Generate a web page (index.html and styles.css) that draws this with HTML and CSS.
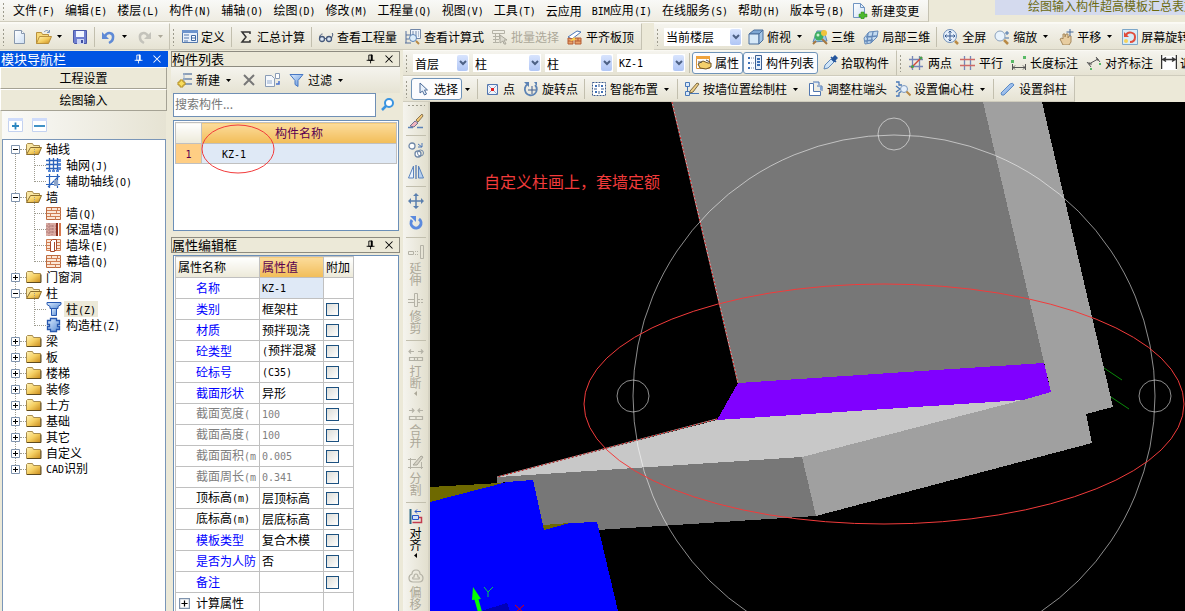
FILE: index.html
```html
<!DOCTYPE html>
<html lang="zh-CN">
<head>
    <meta charset="UTF-8">
    <meta name="viewport" content="width=device-width, initial-scale=1.0">
    <title>绘图输入</title>
    <link rel="stylesheet" href="styles.css">
</head>
<body>
    <!-- icon sprite -->
    <svg class="sprite" aria-hidden="true">
        <defs>
            <linearGradient id="gFolder" x1="0" y1="0" x2="1" y2="1"><stop offset="0" stop-color="#fff3b8"/><stop offset=".5" stop-color="#f5cf62"/><stop offset="1" stop-color="#c88a1c"/></linearGradient>
            <linearGradient id="gBlue" x1="0" y1="0" x2="1" y2="1"><stop offset="0" stop-color="#dcecff"/><stop offset="1" stop-color="#5c8fd6"/></linearGradient>
            <linearGradient id="gPaper" x1="0" y1="0" x2="1" y2="1"><stop offset="0" stop-color="#fff"/><stop offset="1" stop-color="#cfe0f4"/></linearGradient>
        </defs>
        <symbol id="i-new" viewBox="0 0 16 16"><path d="M2.500 1.500h7l3 3v10h-10z" fill="url(#gPaper)" stroke="#8797ad"/><path d="M9.500 1.500v3h3" fill="#fff" stroke="#8797ad"/></symbol>
        <symbol id="i-open" viewBox="0 0 16 16"><path d="M0.500 14.500v-11h5l1 2h6v3" fill="#f7d978" stroke="#b9903c"/><path d="M0.500 14.500l3-7h12l-3 7z" fill="url(#gFolder)" stroke="#b9903c"/><path d="M8 3c2-2 4-2 5 0M13.500 1v2.500h-2.500" fill="none" stroke="#7a94b8"/></symbol>
        <symbol id="i-save" viewBox="0 0 16 16"><path d="M1.500 1.500h13v13h-12l-1-1z" fill="#6f7fd0" stroke="#4a58a8"/><path d="M4 2h8v6h-8z" fill="#f1f5ff"/><path d="M5 10h7v5h-7z" fill="#cdd6f3"/><path d="M9 11h2v3h-2z" fill="#3f4da0"/></symbol>
        <symbol id="i-undo" viewBox="0 0 16 16"><path d="M4 7c3-5 9-3 8 2c0 2-2 4-4 5" fill="none" stroke="#5f8ad6" stroke-width="2.500"/><path d="M1 3l0 7h7z" fill="#5f8ad6"/></symbol>
        <symbol id="i-redo" viewBox="0 0 16 16"><path d="M11 7c-3-5-9-3-8 2c0 2 2 4 4 5" fill="none" stroke="#c4c3bb" stroke-width="2.500"/><path d="M14 3v7h-7z" fill="#c4c3bb"/></symbol>
        <symbol id="i-define" viewBox="0 0 16 16"><path d="M.5 1.500h15v12h-15z" fill="#e8f0fb" stroke="#5579ad"/><path d="M0 1h16v3h-16z" fill="#6c93cc"/><path d="M2 6h5M2 9h5M2 12h4" stroke="#5579ad"/><path d="M9.500 6.500h4v5h-4zM9.500 9h4" fill="#fff" stroke="#3f67a0"/></symbol>
        <symbol id="i-sum" viewBox="0 0 16 16"><path d="M12 5v-2h-8l4 5l-4 5h8v-2" fill="none" stroke="#333" stroke-width="1.500"/></symbol>
        <symbol id="i-glasses" viewBox="0 0 16 16"><circle cx="4" cy="10" r="2.500" fill="#dde8f5" stroke="#46597a" stroke-width="1.300"/><circle cx="11" cy="10" r="2.500" fill="#dde8f5" stroke="#46597a" stroke-width="1.300"/><path d="M6.500 9.500h2M1.500 9c0-3 2-4 3-4M13.500 9c1-2 2-4 .5-5" fill="none" stroke="#46597a"/></symbol>
        <symbol id="i-formula" viewBox="0 0 16 16"><path d="M5.500 .5h10v9h-10z" fill="#eef3fa" stroke="#7187a8"/><path d="M7 3h7M7 5h7M7 7h7" stroke="#7187a8" stroke-dasharray="2 1"/><path d="M1 2v12M0 14h6M1 6h4M1 10h3" stroke="#56719d"/><circle cx="8" cy="9" r="3.500" fill="#dcedfb" stroke="#5c83b4"/><path d="M11 12l3 3" stroke="#b98a45" stroke-width="2"/></symbol>
        <symbol id="i-batch" viewBox="0 0 16 16"><path d="M.5 1.500h12v3h-12zM3.500 4v10M7.500 4v6M1 7.500h8M1 10.500h6M1 13.500h6" fill="none" stroke="#b4b2a6"/><path d="M8 6l7 5h-3l2 4l-2 0l-1-3l-3 2z" fill="#dddbd0" stroke="#aaa89c"/></symbol>
        <symbol id="i-slab" viewBox="0 0 16 16"><path d="M1 8l9-6l4 1l-9 7z" fill="#fff" stroke="#4d79b8"/><path d="M1 9v6h5v-5zM8 9h6v6h-6z" fill="#e9a06a" stroke="#b45c32"/><path d="M8 12h6M11 9v3M1 12h5" stroke="#b45c32"/><path d="M3 12l4-4l2 3z" fill="#ffd24a"/></symbol>
        <symbol id="i-cube" viewBox="0 0 16 16"><path d="M1 5l5-4h9l-4 4z" fill="#7fa8d4" stroke="#4b6f9c"/><path d="M1 5h10v10h-10z" fill="#d7e9f8" stroke="#4b6f9c"/><path d="M11 5l4-4v10l-4 4z" fill="#a6c6e6" stroke="#4b6f9c"/></symbol>
        <symbol id="i-3d" viewBox="0 0 16 16"><path d="M1 13l4-11h7l3 10z" fill="#9fc7e8" stroke="#5c88b6"/><circle cx="7" cy="7" r="4.500" fill="#3faf62"/><circle cx="12" cy="4" r="3" fill="#f0c33a"/><circle cx="6" cy="6" r="1.500" fill="#c9f1d2"/><path d="M10 10l5 5M1 15l3-3" stroke="#a77840" stroke-width="2"/></symbol>
        <symbol id="i-part3d" viewBox="0 0 16 16"><path d="M1 9l5-6l9-1l-1 6l-6 6l-6 1z" fill="#c2daf0" stroke="#6489b8"/><path d="M5 4l-1 10M10 3l-2 11M3 8l11-1M2 12l8-1" fill="none" stroke="#6489b8" stroke-width="1.300"/></symbol>
        <symbol id="i-full" viewBox="0 0 16 16"><circle cx="7" cy="7" r="6.500" fill="#e6f0fb" stroke="#6f8fb8"/><path d="M7 2v10M2 7h10M5.500 3.500l1.500-1.500l1.500 1.500M5.500 10.500l1.500 1.500l1.500-1.500M3.500 5.500l-1.500 1.500l1.500 1.500M10.500 5.500l1.500 1.500l-1.500 1.500" fill="none" stroke="#34588f"/><path d="M12 12l3 3" stroke="#b98a45" stroke-width="2.500"/></symbol>
        <symbol id="i-zoom" viewBox="0 0 16 16"><circle cx="6" cy="7" r="5" fill="#e9f3fc" stroke="#8ba2be"/><path d="M10 11l4 4" stroke="#b98a45" stroke-width="2.500"/><path d="M11 4h4M13 2v4M11 9h4" stroke="#4772ac"/></symbol>
        <symbol id="i-pan" viewBox="0 0 16 16"><path d="M2 10l2-1l1 1v-5h2v3l1-3h2v4l1-2h2v6l-2 3h-6z" fill="#e8cda0" stroke="#a5885c"/><path d="M12 0v7M8.500 3h7" stroke="#47699a"/></symbol>
        <symbol id="i-rotscr" viewBox="0 0 16 16"><path d="M.5 .5h15v15h-15z" fill="#d7ecf8" stroke="#7da7c9"/><path d="M4 6c2-4 9-3 9 2c0 3-2 5-5 5" fill="none" stroke="#e04d3c" stroke-width="2"/><path d="M2 3v5h5z" fill="#e04d3c"/><circle cx="4" cy="12" r="2" fill="#f6d35b"/></symbol>
        <symbol id="i-doc" viewBox="0 0 16 16"><path d="M1.500 .5h7l4 4v10h-11z" fill="url(#gPaper)" stroke="#6f94c2"/><path d="M8.500 .5v4h4" fill="none" stroke="#6f94c2"/><path d="M9 9h3v2h3v3h-3v2h-3v-2h-2v-3h2z" fill="#4db82e" stroke="#2c8a16" stroke-width=".5"/></symbol>
        <symbol id="i-prop" viewBox="0 0 16 16"><path d="M.5 1.500h13v12h-13z" fill="#fff" stroke="#d79440"/><path d="M0 1h14v3h-14z" fill="#f0a33c"/><path d="M2 9l5-3l5 2l3 0v4l-5 2l-6-1z" fill="#f3cf6c" stroke="#6c5328"/><path d="M2 7h4M10 5l4 2" stroke="#4a4a4a"/></symbol>
        <symbol id="i-list" viewBox="0 0 16 16"><path d="M1 2h2v2h-2zM1 7h2v2h-2zM1 12h2v2h-2z" fill="#3d6fb5"/><path d="M4 3h3M4 8h3M4 13h3" stroke="#6f86a8" stroke-dasharray="1 1"/><path d="M8.500 .5h6v14h-6z" fill="#e5effb" stroke="#3d5f92"/><path d="M10 4h3M10 7h3M10 10h3" stroke="#3d6fb5" stroke-width="2"/></symbol>
        <symbol id="i-pick" viewBox="0 0 16 16"><path d="M2 14l1-4l6-6l3 3l-6 6z" fill="#cfe4f7" stroke="#5f88ba"/><path d="M9 2l5 5M10 4l3-3l2 2l-3 3z" fill="#24559c" stroke="#24559c" stroke-width="1.500"/></symbol>
        <symbol id="i-twopt" viewBox="0 0 16 16"><path d="M3.500 1v14M10.500 1v14M0 4.500h14M0 11.500h14" stroke="#7586b8" stroke-width="1.300"/><path d="M2 13l11-11" stroke="#d0493b" stroke-width="1.500"/><circle cx="3.500" cy="11.500" r="1.500" fill="#45a050"/><circle cx="12" cy="3" r="1.500" fill="#45a050"/></symbol>
        <symbol id="i-parallel" viewBox="0 0 16 16"><path d="M4.500 1v14M10.500 1v14" stroke="#7586b8" stroke-width="1.300"/><path d="M0 4.500h15M0 10.500h15" stroke="#cf6a66" stroke-width="1.300"/></symbol>
        <symbol id="i-length" viewBox="0 0 16 16"><path d="M1.500 9v6M14.500 9v6M2 12.500h12M4 10.500l-2 2l2 2M12 10.500l2 2l-2 2" fill="none" stroke="#555"/><path d="M0 5h3v3h-3zM12 1h3v3h-3z" fill="#58b966"/></symbol>
        <symbol id="i-aligned" viewBox="0 0 16 16"><path d="M1 7l4 5M10 2l4 5M3 9l9-5M3 7v2h3M10 4h2v2" fill="none" stroke="#555"/><path d="M4 13h2v2h-2zM13 8h2v2h-2z" fill="#58b966"/></symbol>
        <symbol id="i-adjust" viewBox="0 0 16 16"><path d="M0 1h16v14h-16z" fill="#fff"/><path d="M.5 0v14M15.500 0v14M1 4.500h14M5 2.500l-3 2l3 2M11 2.500l3 2l-3 2" fill="none" stroke="#333" stroke-width="1.500"/></symbol>
        <symbol id="i-cursor" viewBox="0 0 16 16"><path d="M5 2v10l2.500-2l2 4l2-1l-2-4h3z" fill="#e8f0fb" stroke="#4a6a98"/></symbol>
        <symbol id="i-point" viewBox="0 0 16 16"><path d="M3.500 3.500h10v10h-10z" fill="#eef3fb" stroke="#5277b0"/><path d="M4 4l9 9M13 4l-9 9" stroke="#9aa9c6"/><path d="M7 7h3v3h-3z" fill="#e02020"/></symbol>
        <symbol id="i-rotpt" viewBox="0 0 16 16"><path d="M5 3a6 6 0 1 0 7 1" fill="none" stroke="#5c83b4" stroke-width="1.800"/><path d="M1 1h5v5zM11 1h3v4z" fill="#5c83b4"/><path d="M9 5v8M5 9h8" stroke="#405f90"/></symbol>
        <symbol id="i-smart" viewBox="0 0 16 16"><path d="M1.500 1.500h13v13h-13z" fill="#fff" stroke="#3e5c8c" stroke-dasharray="2 1"/><path d="M8 3v10M3 8h10" stroke="#3e5c8c" stroke-dasharray="3 4"/><path d="M4 4h2v2h-2zM10 4h2v2h-2zM4 10h2v2h-2zM10 10h2v2h-2z" fill="#3e6fb5"/></symbol>
        <symbol id="i-bywall" viewBox="0 0 16 16"><path d="M1.500 1.500h4v4h-4zM1.500 10.500h4v4h-4zM3.500 5v6M5 12.500h10" fill="#d9e8f8" stroke="#4878b8"/><path d="M6 10l7-8l2 1l-6 8l-3 1z" fill="#efcf86" stroke="#7c6a42"/></symbol>
        <symbol id="i-end" viewBox="0 0 16 16"><path d="M1.500 2.500h4v8h7v4h-11z" fill="#fff" stroke="#5277b0"/><path d="M5 1h6v3M9 5h5v5" fill="#d9e8f8" stroke="#5277b0"/><path d="M12 5l3 2l-3 3z" fill="#7fa3d4"/></symbol>
        <symbol id="i-ecc" viewBox="0 0 16 16"><path d="M1 1h3v3h3M1 15h3v-3l3-2M1 5l4 3l-4 3" fill="none" stroke="#4878b8" stroke-width="1.300"/><circle cx="9" cy="8" r="3.500" fill="#e6f0fb" stroke="#7d99bf"/><path d="M11.500 10.500l4 4" stroke="#b98a45" stroke-width="2"/></symbol>
        <symbol id="i-slant" viewBox="0 0 16 16"><path d="M1 12l9-9q3-2 4 1l-10 10q-3 1-3-2z" fill="url(#gBlue)" stroke="#5a8ac6"/></symbol>

        <symbol id="i-pin" viewBox="0 0 16 16"><path d="M5.500 3.500h4v6h-4zM3 9.500h9M7.500 10v3" fill="none" stroke="currentColor" stroke-width="1"/><path d="M8.500 3v7" stroke="currentColor" stroke-width="1.500"/></symbol>
        <symbol id="i-close" viewBox="0 0 16 16"><path d="M4 4l8 8M12 4l-8 8" stroke="currentColor" stroke-width="1.200"/></symbol>
        <symbol id="i-down" viewBox="0 0 5 3"><path d="M0 0h5l-2.500 3z" fill="currentColor"/></symbol>
        <symbol id="i-left" viewBox="0 0 3 5"><path d="M3 0v5l-3-2.500z" fill="currentColor"/></symbol>
        <symbol id="i-chev" viewBox="0 0 8 6"><path d="M1 1l3 3l3-3" fill="none" stroke="#4d6185" stroke-width="2"/></symbol>
        <symbol id="i-plusbox" viewBox="0 0 16 16"><path d="M.5 1.500h14v13h-14z" fill="#fff" stroke="#c4d2f0"/><path d="M0 1h15v3h-15z" fill="#cfdcfb"/><path d="M7.500 5.500v7M4 9h7" stroke="#2c86c0" stroke-width="1.800"/></symbol>
        <symbol id="i-minusbox" viewBox="0 0 16 16"><path d="M.5 1.500h14v13h-14z" fill="#fff" stroke="#c4d2f0"/><path d="M0 1h15v3h-15z" fill="#cfdcfb"/><path d="M2 9h11" stroke="#2c86c0" stroke-width="1.800"/></symbol>
        <symbol id="i-plus" viewBox="0 0 9 9"><path d="M.5 .5h8v8h-8z" fill="#fff" stroke="#7f93ad"/><path d="M2 4.500h5M4.500 2v5" stroke="#000"/></symbol>
        <symbol id="i-minus" viewBox="0 0 9 9"><path d="M.5 .5h8v8h-8z" fill="#fff" stroke="#7f93ad"/><path d="M2 4.500h5" stroke="#000"/></symbol>
        <symbol id="i-folder" viewBox="0 0 16 16"><path d="M.5 13.500v-10l1-1h5l1 2h7v9z" fill="url(#gFolder)" stroke="#a88c4e"/><path d="M1 13.500h14v-8" fill="none" stroke="#5f4a1e"/></symbol>
        <symbol id="i-folderopen" viewBox="0 0 16 16"><path d="M.5 12.500v-9l1-1h5l1 2h6v3" fill="#f9e6a2" stroke="#a88c4e"/><path d="M.5 13.500l4-7h11l-3 7z" fill="url(#gFolder)" stroke="#8a6c2c"/></symbol>
        <symbol id="i-grid" viewBox="0 0 16 16"><path d="M3.500 1v13M7.500 1v13M11.500 1v13M0 3.500h14M0 7.500h14M0 11.500h14" stroke="#2b62bb" stroke-width="1.300"/><path d="M12 2h3v3h-3zM12 6h3v3h-3zM12 10h3v3h-3zM2 13h3v2h-3zM6 13h3v2h-3zM10 13h3v2h-3z" fill="#5b8ad6"/></symbol>
        <symbol id="i-auxgrid" viewBox="0 0 16 16"><path d="M3.500 1v14M11.500 1v14M0 3.500h14M0 11.500h14M2 14l11-11" stroke="#2b62bb" stroke-width="1.200"/><path d="M8 7h4v6h-4z" fill="#8da4c9"/></symbol>
        <symbol id="i-brick" viewBox="0 0 16 16"><path d="M.5 2.500h14v12h-14z" fill="#fbe7d6" stroke="#bd6a3f"/><path d="M1 5.500h14M1 8.500h14M1 11.500h14M5.500 3v3M10.500 6v3M4.500 9v3M9.500 12v3M11.500 3v3" stroke="#cf7d52"/></symbol>
        <symbol id="i-insul" viewBox="0 0 16 16"><path d="M0 2h10v13h-10z" fill="#d9aaa2"/><path d="M0 5h10M0 8h10M0 11h10M3 2v13M6 4v10" stroke="#b07b78" stroke-dasharray="2 1"/><path d="M10 2h2v13h-2z" fill="#8a3020"/><path d="M13 2h2v13h-2z" fill="#d97a4e"/></symbol>
        <symbol id="i-pier" viewBox="0 0 16 16"><path d="M.5 2.500h14v11h-14zM1 5.500h14M1 8.500h14M1 11.500h14" fill="#fbe7d6" stroke="#cf7d52"/><path d="M4.500 4.500l2-2h4v10l-2 2h-4zM8.500 5v9" fill="#fff" stroke="#a8492a"/></symbol>
        <symbol id="i-column" viewBox="0 0 16 16"><path d="M1 1.500h14v2l-3 2v2h-8v-2l-3-2z" fill="url(#gBlue)" stroke="#2758b0"/><path d="M5.500 7.500h5v7h-5z" fill="url(#gBlue)" stroke="#2758b0"/></symbol>
        <symbol id="i-tiecol" viewBox="0 0 16 16"><path d="M4.500 1.500h6v2h3v4h-2v2h2v3h-3v2h-6v-2h-3v-3h2v-2h-2v-4h3z" fill="url(#gBlue)" stroke="#2758b0" stroke-width="1.300"/></symbol>

        <symbol id="i-add" viewBox="0 0 16 16"><path d="M6 2h9M6 7h9M8 12h7" stroke="#6d87ab" stroke-width="1.500"/><path d="M7 1v11" stroke="#9eb1cc"/><path d="M3 8h3v2h2v3h-2v2h-3v-2h-2v-3h2z" fill="#f8dc5c" stroke="#b08b20"/></symbol>
        <symbol id="i-del" viewBox="0 0 16 16"><path d="M3 3l10 10M13 3l-10 10" stroke="#777" stroke-width="2"/></symbol>
        <symbol id="i-copy" viewBox="0 0 16 16"><path d="M.5 3.500h6l3 3v8h-9z" fill="#f5f8fc" stroke="#8a9cb6"/><path d="M2 8h5v4h-5z" fill="#c5d2e5"/><path d="M10.500 1.500h4v5h-4z" fill="#fff" stroke="#8a9cb6"/><path d="M14 9v3h-3" fill="none" stroke="#4a72d0" stroke-width="1.500"/></symbol>
        <symbol id="i-filter" viewBox="0 0 16 16"><path d="M1 2.500h13l-5 6v6l-3-2v-4z" fill="url(#gBlue)" stroke="#4878c4"/></symbol>
        <symbol id="i-search" viewBox="0 0 16 16"><circle cx="9" cy="7" r="4" fill="#fff" stroke="#3a94e0" stroke-width="2"/><path d="M6 10l-4 4" stroke="#3a94e0" stroke-width="2.500"/></symbol>

        <symbol id="i-erase" viewBox="0 0 16 16"><path d="M0 14.500h5M9 14.500h6" stroke="#5b83b8" stroke-width="1.500"/><path d="M8 7l6-6l1 2l-5 6z" fill="#f1c878" stroke="#8c7550"/><path d="M7 8l3 2l-4 4l-4-1z" fill="#f0b4bd" stroke="#6f6f92"/></symbol>
        <symbol id="i-dup" viewBox="0 0 16 16"><circle cx="4" cy="4" r="3" fill="#fff" stroke="#7088a8" stroke-width="1.300"/><circle cx="10" cy="12" r="3" fill="#fff" stroke="#7088a8" stroke-width="1.300"/><circle cx="12.500" cy="11" r="3" fill="none" stroke="#7088a8"/><path d="M10 2l4 3M14 1v4h-4" fill="none" stroke="#4f79b8"/></symbol>
        <symbol id="i-mirror" viewBox="0 0 16 16"><path d="M5.500 2v12h-5z" fill="#eaf2fc" stroke="#5a83bd"/><path d="M8 1v14" stroke="#2d5ca6"/><path d="M10.500 2v12h5z" fill="#b7d0ee" stroke="#5a83bd"/></symbol>
        <symbol id="i-move" viewBox="0 0 16 16"><path d="M8 2v12M2 8h12" stroke="#5a7fae" stroke-width="1.500"/><path d="M8 0l3 3h-6zM8 16l3-3h-6zM0 8l3-3v6zM16 8l-3-3v6z" fill="#5a7fae"/></symbol>
        <symbol id="i-rotate" viewBox="0 0 16 16"><path d="M4 5a5 5 0 1 0 7-1" fill="none" stroke="#5b8ade" stroke-width="3"/><path d="M2 1h6v6z" fill="#5b8ade"/></symbol>
        <symbol id="i-extend" viewBox="0 0 16 16"><path d="M.5 7.500h5v3h-5z" fill="none" stroke="#b4b2a6"/><path d="M7 7.500h4M7 10.500h4" stroke="#b4b2a6" stroke-dasharray="1 1"/><path d="M12.500 1.500h3v13h-3z" fill="none" stroke="#b4b2a6"/></symbol>
        <symbol id="i-trim" viewBox="0 0 16 16"><path d="M6.500 1.500h3v13h-3zM0 7.500h6M0 10.500h6" fill="none" stroke="#b4b2a6"/><path d="M10 7.500h6M10 10.500h6" stroke="#b4b2a6" stroke-dasharray="2 1"/></symbol>
        <symbol id="i-break" viewBox="0 0 16 16"><path d="M6 4.500h-5M10 4.500h5M3 2.500l-2 2l2 2M13 2.500l2 2l-2 2M1.500 10.500h13v3h-13zM6.500 10v4M9.500 10v4" fill="none" stroke="#b4b2a6" stroke-width="1.200"/></symbol>
        <symbol id="i-merge" viewBox="0 0 16 16"><path d="M1 4.500h5M15 4.500h-5M4 2.500l2 2l-2 2M12 2.500l-2 2l2 2M1.500 10.500h13v3h-13zM8 10v4" fill="none" stroke="#b4b2a6" stroke-width="1.200"/></symbol>
        <symbol id="i-split" viewBox="0 0 16 16"><path d="M0 5.500h8M0 13.500h15M2.500 4v11M13.500 8v7" stroke="#b4b2a6"/><path d="M5 11l8-9l2 1l-6 8z" fill="#d6d3c6" stroke="#a7a599"/></symbol>
        <symbol id="i-align" viewBox="0 0 16 16"><path d="M2.500 0v15" stroke="#2c6a8a" stroke-width="2"/><path d="M6.500 8.500h7v5h-9" fill="none" stroke="#c23b4e" stroke-width="1.500"/><path d="M4.500 6.500h6v4h-6z" fill="#cfe0f8" stroke="#2858c8"/><path d="M7 2.500h6M9 .5l-2 2l2 2" fill="none" stroke="#2858c8"/></symbol>
        <symbol id="i-offset" viewBox="0 0 16 16"><path d="M8 2q4 0 4 4q3 1 3 4q0 4-4 4h-6q-4 0-4-4q0-3 3-4q0-4 4-4zM8 6q2 0 2 3q2 0 1 2h-6q-1-2 1-2q0-3 2-3z" fill="none" stroke="#b4b2a6" stroke-width="1.200"/></symbol>
    </svg>

    <header class="titlebar">
        <nav class="menubar">
            <i class="grip"></i>
            <a href="#">文件<kbd>(F)</kbd></a>
            <a href="#">编辑<kbd>(E)</kbd></a>
            <a href="#">楼层<kbd>(L)</kbd></a>
            <a href="#">构件<kbd>(N)</kbd></a>
            <a href="#">辅轴<kbd>(O)</kbd></a>
            <a href="#">绘图<kbd>(D)</kbd></a>
            <a href="#">修改<kbd>(M)</kbd></a>
            <a href="#">工程量<kbd>(Q)</kbd></a>
            <a href="#">视图<kbd>(V)</kbd></a>
            <a href="#">工具<kbd>(T)</kbd></a>
            <a href="#">云应用</a>
            <a href="#"><kbd>BIM</kbd>应用<kbd>(I)</kbd></a>
            <a href="#">在线服务<kbd>(S)</kbd></a>
            <a href="#">帮助<kbd>(H)</kbd></a>
            <a href="#">版本号<kbd>(B)</kbd></a>
            <button class="tool"><svg class="icon"><use href="#i-doc"/></svg><span>新建变更</span></button>
        </nav>
        <a class="notice" href="#">绘图输入构件超高模板汇总表文</a>
    </header>

    <div class="toolrow">
        <div class="bar">
            <i class="grip"></i>
            <button class="tool" aria-label="新建"><svg class="icon"><use href="#i-new"/></svg></button>
            <button class="tool" aria-label="打开"><svg class="icon"><use href="#i-open"/></svg><svg class="arrow"><use href="#i-down"/></svg></button>
            <button class="tool" aria-label="保存"><svg class="icon"><use href="#i-save"/></svg></button>
            <i class="sep"></i>
            <button class="tool" aria-label="撤销"><svg class="icon"><use href="#i-undo"/></svg><svg class="arrow"><use href="#i-down"/></svg></button>
            <button class="tool" aria-label="恢复" disabled><svg class="icon"><use href="#i-redo"/></svg><svg class="arrow"><use href="#i-down"/></svg></button>
        </div>
        <div class="bar">
            <i class="grip"></i>
            <button class="tool"><svg class="icon"><use href="#i-define"/></svg><span>定义</span></button>
            <i class="sep"></i>
            <button class="tool"><svg class="icon"><use href="#i-sum"/></svg><span>汇总计算</span></button>
            <i class="sep"></i>
            <button class="tool"><svg class="icon"><use href="#i-glasses"/></svg><span>查看工程量</span></button>
            <button class="tool"><svg class="icon"><use href="#i-formula"/></svg><span>查看计算式</span></button>
            <button class="tool" disabled><svg class="icon"><use href="#i-batch"/></svg><span>批量选择</span></button>
            <button class="tool"><svg class="icon"><use href="#i-slab"/></svg><span>平齐板顶</span></button>
        </div>
        <div class="bar bar-view">
            <i class="grip"></i>
            <div class="combo combo-lg"><select aria-label="楼层范围"><option>当前楼层</option></select><span class="drop"><svg><use href="#i-chev"/></svg></span></div>
            <button class="tool"><svg class="icon"><use href="#i-cube"/></svg><span>俯视</span><svg class="arrow"><use href="#i-down"/></svg></button>
            <button class="tool"><svg class="icon"><use href="#i-3d"/></svg><span>三维</span></button>
            <button class="tool"><svg class="icon"><use href="#i-part3d"/></svg><span>局部三维</span></button>
            <i class="sep"></i>
            <button class="tool"><svg class="icon"><use href="#i-full"/></svg><span>全屏</span></button>
            <button class="tool"><svg class="icon"><use href="#i-zoom"/></svg><span>缩放</span><svg class="arrow"><use href="#i-down"/></svg></button>
            <button class="tool"><svg class="icon"><use href="#i-pan"/></svg><span>平移</span><svg class="arrow"><use href="#i-down"/></svg></button>
            <button class="tool"><svg class="icon"><use href="#i-rotscr"/></svg><span>屏幕旋转</span></button>
        </div>
    </div>

    <main class="workspace">
        <aside class="nav-panel">
            <div class="panel-title active">
                <h2>模块导航栏</h2>
                <button aria-label="固定"><svg><use href="#i-pin"/></svg></button>
                <button aria-label="关闭"><svg><use href="#i-close"/></svg></button>
            </div>
            <button class="stack-btn">工程设置</button>
            <button class="stack-btn">绘图输入</button>
            <div class="tree-tools">
                <button class="tool" aria-label="全部展开"><svg class="icon"><use href="#i-plusbox"/></svg></button>
                <button class="tool" aria-label="全部折叠"><svg class="icon"><use href="#i-minusbox"/></svg></button>
            </div>
            <ul class="tree">
                <li><div class="node"><svg class="exp"><use href="#i-minus"/></svg><i></i><svg class="icon"><use href="#i-folderopen"/></svg><span>轴线</span></div>
                    <ul>
                        <li><svg class="icon"><use href="#i-grid"/></svg><span>轴网<kbd>(J)</kbd></span></li>
                        <li><svg class="icon"><use href="#i-auxgrid"/></svg><span>辅助轴线<kbd>(O)</kbd></span></li>
                    </ul>
                </li>
                <li><div class="node"><svg class="exp"><use href="#i-minus"/></svg><i></i><svg class="icon"><use href="#i-folderopen"/></svg><span>墙</span></div>
                    <ul>
                        <li><svg class="icon"><use href="#i-brick"/></svg><span>墙<kbd>(Q)</kbd></span></li>
                        <li><svg class="icon"><use href="#i-insul"/></svg><span>保温墙<kbd>(Q)</kbd></span></li>
                        <li><svg class="icon"><use href="#i-pier"/></svg><span>墙垛<kbd>(E)</kbd></span></li>
                        <li><svg class="icon"><use href="#i-brick"/></svg><span>幕墙<kbd>(Q)</kbd></span></li>
                    </ul>
                </li>
                <li><div class="node"><svg class="exp"><use href="#i-plus"/></svg><i></i><svg class="icon"><use href="#i-folder"/></svg><span>门窗洞</span></div></li>
                <li><div class="node"><svg class="exp"><use href="#i-minus"/></svg><i></i><svg class="icon"><use href="#i-folderopen"/></svg><span>柱</span></div>
                    <ul>
                        <li><svg class="icon"><use href="#i-column"/></svg><span class="selected">柱<kbd>(Z)</kbd></span></li>
                        <li><svg class="icon"><use href="#i-tiecol"/></svg><span>构造柱<kbd>(Z)</kbd></span></li>
                    </ul>
                </li>
                <li><div class="node"><svg class="exp"><use href="#i-plus"/></svg><i></i><svg class="icon"><use href="#i-folder"/></svg><span>梁</span></div></li>
                <li><div class="node"><svg class="exp"><use href="#i-plus"/></svg><i></i><svg class="icon"><use href="#i-folder"/></svg><span>板</span></div></li>
                <li><div class="node"><svg class="exp"><use href="#i-plus"/></svg><i></i><svg class="icon"><use href="#i-folder"/></svg><span>楼梯</span></div></li>
                <li><div class="node"><svg class="exp"><use href="#i-plus"/></svg><i></i><svg class="icon"><use href="#i-folder"/></svg><span>装修</span></div></li>
                <li><div class="node"><svg class="exp"><use href="#i-plus"/></svg><i></i><svg class="icon"><use href="#i-folder"/></svg><span>土方</span></div></li>
                <li><div class="node"><svg class="exp"><use href="#i-plus"/></svg><i></i><svg class="icon"><use href="#i-folder"/></svg><span>基础</span></div></li>
                <li><div class="node"><svg class="exp"><use href="#i-plus"/></svg><i></i><svg class="icon"><use href="#i-folder"/></svg><span>其它</span></div></li>
                <li><div class="node"><svg class="exp"><use href="#i-plus"/></svg><i></i><svg class="icon"><use href="#i-folder"/></svg><span>自定义</span></div></li>
                <li><div class="node"><svg class="exp"><use href="#i-plus"/></svg><i></i><svg class="icon"><use href="#i-folder"/></svg><span><kbd>CAD</kbd>识别</span></div></li>
            </ul>
        </aside>

        <aside class="side-panels">
            <section class="list-panel">
                <div class="panel-title">
                    <h2>构件列表</h2>
                    <button aria-label="固定"><svg><use href="#i-pin"/></svg></button>
                    <button aria-label="关闭"><svg><use href="#i-close"/></svg></button>
                </div>
                <div class="list-tools">
                    <button class="tool"><svg class="icon"><use href="#i-add"/></svg><span>新建</span><svg class="arrow"><use href="#i-down"/></svg></button>
                    <button class="tool" aria-label="删除"><svg class="icon"><use href="#i-del"/></svg></button>
                    <button class="tool" aria-label="复制"><svg class="icon"><use href="#i-copy"/></svg></button>
                    <button class="tool"><svg class="icon"><use href="#i-filter"/></svg><span>过滤</span><svg class="arrow"><use href="#i-down"/></svg></button>
                </div>
                <div class="search">
                    <input type="text" placeholder="搜索构件..." aria-label="搜索构件">
                    <button class="tool" aria-label="搜索"><svg class="icon"><use href="#i-search"/></svg></button>
                </div>
                <div class="list-box">
                    <table class="list">
                        <thead><tr><th class="num"></th><th>构件名称</th></tr></thead>
                        <tbody><tr><td class="num"><kbd>1</kbd></td><td><kbd>KZ-1</kbd></td></tr></tbody>
                    </table>
                    <svg class="mark" viewBox="0 0 76 50"><ellipse cx="38" cy="25" rx="36" ry="24"/></svg>
                </div>
            </section>

            <section class="prop-panel">
                <div class="panel-title">
                    <h2>属性编辑框</h2>
                    <button aria-label="固定"><svg><use href="#i-pin"/></svg></button>
                    <button aria-label="关闭"><svg><use href="#i-close"/></svg></button>
                </div>
                <div class="prop-box">
                    <table class="props">
                        <thead><tr><th>属性名称</th><th class="current">属性值</th><th>附加</th></tr></thead>
                        <tbody>
                            <tr><td class="key">名称</td><td class="current"><kbd>KZ-1</kbd></td><td></td></tr>
                            <tr><td class="key">类别</td><td>框架柱</td><td><input type="checkbox" aria-label="类别"></td></tr>
                            <tr><td class="key">材质</td><td>预拌现浇</td><td><input type="checkbox" aria-label="材质"></td></tr>
                            <tr><td class="key">砼类型</td><td><kbd>(</kbd>预拌混凝</td><td><input type="checkbox" aria-label="砼类型"></td></tr>
                            <tr><td class="key">砼标号</td><td><kbd>(C35)</kbd></td><td><input type="checkbox" aria-label="砼标号"></td></tr>
                            <tr><td class="key">截面形状</td><td>异形</td><td><input type="checkbox" aria-label="截面形状"></td></tr>
                            <tr class="readonly"><td>截面宽度<kbd>(</kbd></td><td><kbd>100</kbd></td><td><input type="checkbox" aria-label="截面宽度"></td></tr>
                            <tr class="readonly"><td>截面高度<kbd>(</kbd></td><td><kbd>100</kbd></td><td><input type="checkbox" aria-label="截面高度"></td></tr>
                            <tr class="readonly"><td>截面面积<kbd>(m</kbd></td><td><kbd>0.005</kbd></td><td><input type="checkbox" aria-label="截面面积"></td></tr>
                            <tr class="readonly"><td>截面周长<kbd>(m</kbd></td><td><kbd>0.341</kbd></td><td><input type="checkbox" aria-label="截面周长"></td></tr>
                            <tr><td>顶标高<kbd>(m)</kbd></td><td>层顶标高</td><td><input type="checkbox" aria-label="顶标高"></td></tr>
                            <tr><td>底标高<kbd>(m)</kbd></td><td>层底标高</td><td><input type="checkbox" aria-label="底标高"></td></tr>
                            <tr><td class="key">模板类型</td><td>复合木模</td><td><input type="checkbox" aria-label="模板类型"></td></tr>
                            <tr><td class="key">是否为人防</td><td>否</td><td><input type="checkbox" aria-label="是否为人防"></td></tr>
                            <tr><td class="key">备注</td><td></td><td><input type="checkbox" aria-label="备注"></td></tr>
                            <tr class="group"><td><svg class="exp"><use href="#i-plus"/></svg>计算属性</td><td></td><td></td></tr>
                        </tbody>
                    </table>
                </div>
            </section>
        </aside>

        <section class="work">
            <div class="toolrow">
                <div class="bar">
                    <i class="grip"></i>
                    <div class="combo combo-sm"><select aria-label="楼层"><option>首层</option></select><span class="drop"><svg><use href="#i-chev"/></svg></span></div>
                    <div class="combo"><select aria-label="构件大类"><option>柱</option></select><span class="drop"><svg><use href="#i-chev"/></svg></span></div>
                    <div class="combo"><select aria-label="构件类型"><option>柱</option></select><span class="drop"><svg><use href="#i-chev"/></svg></span></div>
                    <div class="combo"><select class="latin" aria-label="构件"><option>KZ-1</option></select><span class="drop"><svg><use href="#i-chev"/></svg></span></div>
                    <i class="sep"></i>
                    <button class="tool pressed"><svg class="icon"><use href="#i-prop"/></svg><span>属性</span></button>
                    <button class="tool pressed"><svg class="icon"><use href="#i-list"/></svg><span>构件列表</span></button>
                    <button class="tool"><svg class="icon"><use href="#i-pick"/></svg><span>拾取构件</span></button>
                </div>
                <div class="bar">
                    <i class="grip"></i>
                    <button class="tool"><svg class="icon"><use href="#i-twopt"/></svg><span>两点</span></button>
                    <button class="tool"><svg class="icon"><use href="#i-parallel"/></svg><span>平行</span></button>
                    <button class="tool"><svg class="icon"><use href="#i-length"/></svg><span>长度标注</span></button>
                    <button class="tool"><svg class="icon"><use href="#i-aligned"/></svg><span>对齐标注</span></button>
                    <button class="tool"><svg class="icon"><use href="#i-adjust"/></svg><span>调整标注</span></button>
                </div>
            </div>
            <div class="toolrow">
                <div class="bar">
                    <i class="grip"></i>
                    <button class="tool pressed"><svg class="icon"><use href="#i-cursor"/></svg><span>选择</span></button>
                    <button class="tool split" aria-label="选择方式"><svg class="arrow"><use href="#i-down"/></svg></button>
                    <i class="sep"></i>
                    <button class="tool"><svg class="icon"><use href="#i-point"/></svg><span>点</span></button>
                    <button class="tool"><svg class="icon"><use href="#i-rotpt"/></svg><span>旋转点</span></button>
                    <i class="sep"></i>
                    <button class="tool"><svg class="icon"><use href="#i-smart"/></svg><span>智能布置</span><svg class="arrow"><use href="#i-down"/></svg></button>
                    <i class="sep"></i>
                    <button class="tool"><svg class="icon"><use href="#i-bywall"/></svg><span>按墙位置绘制柱</span><svg class="arrow"><use href="#i-down"/></svg></button>
                    <button class="tool"><svg class="icon"><use href="#i-end"/></svg><span>调整柱端头</span></button>
                    <button class="tool"><svg class="icon"><use href="#i-ecc"/></svg><span>设置偏心柱</span><svg class="arrow"><use href="#i-down"/></svg></button>
                    <i class="sep"></i>
                    <button class="tool"><svg class="icon"><use href="#i-slant"/></svg><span>设置斜柱</span></button>
                </div>
            </div>
            <div class="stage">
                <div class="vbar">
                    <i class="grip-h"></i>
                    <button class="vtool" aria-label="删除"><svg class="icon"><use href="#i-erase"/></svg></button>
                    <i class="sep-h"></i>
                    <button class="vtool" aria-label="复制"><svg class="icon"><use href="#i-dup"/></svg></button>
                    <button class="vtool" aria-label="镜像"><svg class="icon"><use href="#i-mirror"/></svg></button>
                    <i class="sep-h"></i>
                    <button class="vtool" aria-label="移动"><svg class="icon"><use href="#i-move"/></svg></button>
                    <button class="vtool" aria-label="旋转"><svg class="icon"><use href="#i-rotate"/></svg></button>
                    <i class="sep-h"></i>
                    <button class="vtool" disabled><svg class="icon"><use href="#i-extend"/></svg><span>延伸</span></button>
                    <button class="vtool" disabled><svg class="icon"><use href="#i-trim"/></svg><span>修剪</span></button>
                    <i class="sep-h"></i>
                    <button class="vtool" disabled><svg class="icon"><use href="#i-break"/></svg><span>打断</span><svg class="arrow"><use href="#i-left"/></svg></button>
                    <button class="vtool" disabled><svg class="icon"><use href="#i-merge"/></svg><span>合并</span></button>
                    <button class="vtool" disabled><svg class="icon"><use href="#i-split"/></svg><span>分割</span></button>
                    <i class="sep-h"></i>
                    <button class="vtool"><svg class="icon"><use href="#i-align"/></svg><span>对齐</span><svg class="arrow"><use href="#i-left"/></svg></button>
                    <button class="vtool" disabled><svg class="icon"><use href="#i-offset"/></svg><span>偏移</span></button>
                </div>
                <svg class="canvas" viewBox="430 102 755 509" preserveAspectRatio="xMinYMin slice">
                    <!-- wall and column faces -->
                    <g shape-rendering="crispEdges">
                        <polygon fill="#6e6900" points="430,487 500,483 533,481 550,530 430,530"/>
                        <polygon fill="#777" points="672,102 983,102 1045,363 738,383"/>
                        <polygon fill="#a0a0a0" points="983,102 1042,102 1113,407 1086,414 1092,443 816,516 802,457 1023,399 1051,392"/>
                        <polygon fill="#777" points="497,477 802,457 816,516 597,530 570,523 543,525 533,480 497,483"/>
                        <polygon fill="#c8c8c8" points="498,477 717,420 1030,398 802,457"/>
                        <polygon fill="#8000ff" points="738,383 1044,363 1051,392 1023,400 717,420"/>
                        <polygon fill="#0000ff" points="430,502 507,482 533,480 544,530 570,523 597,522 618,611 430,611"/>
                        <polygon fill="#6e6900" points="543,525 570,523 544,530"/>
                        <polygon fill="#0000b8" points="481,611 507,603 510,611"/>
                    </g>
                    <path d="M672 102L738 383M717 419L497 477" fill="none" stroke="#bbb"/>
                    <path d="M672 102L738 383M717 419L497 477" fill="none" stroke="#d01818" stroke-dasharray="2 2"/>
                    <path d="M1104 368L1122 380M1111 397L1129 409" stroke="#0a8a0a"/>
                    <!-- orbit gizmo -->
                    <g fill="none" stroke="#fff" stroke-opacity=".55">
                        <circle cx="894" cy="396" r="261"/>
                        <circle cx="633" cy="396" r="16"/>
                        <circle cx="1155" cy="396" r="16"/>
                        <circle cx="894" cy="134" r="16"/>
                    </g>
                    <!-- axes -->
                    <path d="M480 612L475 594" stroke="#0f0" stroke-width="4"/>
                    <polygon fill="#0f0" points="473,587 481,599 472,600"/>
                    <path d="M484 587l4 5l5-5M488 592v5" fill="none" stroke="#0c5"/>
                    <path d="M515 605l9 8M524 605l-9 8" stroke="#e00000"/>
                    <ellipse cx="884" cy="404" rx="300" ry="120" fill="none" stroke="#f23b3b"/>
                    <text x="484" y="188">自定义柱画上，套墙定额</text>
                </svg>
            </div>
        </section>
    </main>
</body>
</html>
```
FILE: styles.css
```css
* { box-sizing: border-box; }
body { margin: 0; height: 100vh; overflow: hidden; display: flex; flex-direction: column; background: #ece9d8; color: #000; font: 12px/16px "Noto Sans CJK SC", sans-serif; white-space: nowrap; }
button { font: inherit; color: inherit; background: none; border: 0; padding: 0; }
a { color: inherit; text-decoration: none; }
kbd, .latin { font-family: "DejaVu Sans Mono", "Noto Sans CJK SC", monospace; font-size: 10px; }
ul { list-style: none; margin: 0; padding: 0; }
svg { display: block; flex: none; }
.sprite { position: absolute; width: 0; height: 0; }
.icon { width: 16px; height: 16px; }
.exp { width: 9px; height: 9px; }

/* menu */
.titlebar { display: flex; height: 23px; flex: none; justify-content: space-between; align-items: flex-start; border-bottom: 1px solid #fbfaf5; }
.menubar { display: flex; align-items: center; height: 22px; padding-right: 5px; background: linear-gradient(#f9f9f7, #eeece2); border-right: 1px solid #c5c2b2; border-bottom: 1px solid #cfccbd; }
.menubar a { padding: 0 5px; line-height: 20px; }
.menubar .tool { padding-left: 3px; }
.notice { width: 190px; height: 15px; padding-left: 33px; overflow: hidden; background: #d4daee; color: #6b6a10; line-height: 12px; }

/* toolbars */
.toolrow { display: flex; flex: none; height: 26px; overflow: hidden; }
body > .toolrow { height: 27px; }
.bar { display: flex; flex: none; align-items: center; padding-right: 3px; background: linear-gradient(#f5f4ee, #e6e3d3); border-right: 1px solid #c5c2b2; border-bottom: 1px solid #cfccbd; border-top: 1px solid #faf9f4; }
.bar:first-child:has(.tool[disabled]) { padding-right: 0; }
.bar-view { margin-left: 12px; }
.grip { width: 3px; height: 18px; margin: 0 3px 0 2px; background: radial-gradient(circle, #9c9a8c 1px, transparent 1px) 0 0 / 3px 4px; }
.bar .grip { margin-right: 3px; }
.sep { width: 1px; height: 20px; margin: 0 2px; background: #c2bfae; }
.tool { display: flex; align-items: center; gap: 3px; height: 22px; padding: 0 4px; }
.tool .arrow { width: 5px; height: 3px; margin: 0 2px; }
.tool span + .arrow { margin-left: 3px; }
.tool.pressed { padding: 0 3px; background: #fcfcfe; border: 1px solid #6f93b8; border-radius: 3px; }
.tool.split { padding: 0 3px 0 1px; }
button[disabled] { color: #aca899; }
.combo { display: flex; width: 68px; height: 18px; margin: 0 2px; background: #fff; }
.combo-sm { width: 56px; }
.combo-lg { width: 78px; }
.combo select { flex: 1; min-width: 0; appearance: none; border: 0; padding: 0 2px; background: none; font-size: 12px; font-family: inherit; color: #000; }
.combo select.latin { font-family: "DejaVu Sans Mono", monospace; font-size: 10px; }
.drop { display: flex; align-items: center; justify-content: center; width: 11px; margin: 1px; border-radius: 2px; background: linear-gradient(#d8e4fd, #b0c6f5); }
.drop svg { width: 8px; height: 6px; }

/* panels */
.workspace { flex: 1; min-height: 0; display: flex; gap: 3px; }
.panel-title { display: flex; align-items: center; flex: none; height: 16px; border: 1px solid #8d8b80; }
.panel-title h2 { flex: 1; margin: 0; font-size: 13px; font-weight: normal; line-height: 14px; }
.panel-title button { width: 18px; }
.panel-title svg { width: 16px; height: 14px; }
.panel-title.active { background: #0054e3; border-color: #0054e3; color: #fff; }
.nav-panel { width: 168px; flex: none; padding-top: 1px; display: flex; flex-direction: column; }
.stack-btn { height: 22px; flex: none; margin-right: 1px; border: 1px solid; border-color: #fff #a5a294 #a5a294 #fff; background: #ece9d8; }
.tree-tools { display: flex; align-items: center; flex: none; gap: 0; height: 28px; margin: 0 2px; padding: 0 2px; background: linear-gradient(90deg, #fafaf8, #e6e3d3); }
.tree { flex: 1; margin: 0 2px; padding: 1px 0 0 8px; background: #fff; border: 1px solid #7a96b8; border-bottom: 0; }
.tree > li { position: relative; }
.tree > li:not(:last-child)::before { content: ""; position: absolute; left: 4px; top: 8px; bottom: -8px; border-left: 1px dotted #9d9b8f; }
.tree .node { position: relative; display: flex; align-items: center; height: 16px; }
.tree .node i { width: 6px; border-top: 1px dotted #9d9b8f; }
.tree span { margin-left: 2px; padding: 0 2px; }
.tree ul { position: relative; padding-left: 35px; }
.tree ul li { position: relative; display: flex; height: 16px; }
.tree ul li::before { content: ""; position: absolute; left: -12px; top: -8px; width: 11px; height: 16px; border: dotted #9d9b8f; border-width: 0 0 1px 1px; }
.tree .selected { background: #ece9d8; }

.side-panels { width: 229px; flex: none; padding-top: 1px; display: flex; flex-direction: column; gap: 6px; }
.list-panel { flex: none; }
.list-tools { display: flex; align-items: center; height: 26px; padding-left: 2px; background: linear-gradient(#f5f4ee, #e6e3d3); }
.search { display: flex; height: 25px; }
.search input { flex: 1; min-width: 0; height: 24px; margin-left: 2px; border: 1px solid #6f8fb5; padding: 0 1px 4px; font: inherit; }
.search input::placeholder { color: #777; }
.list-box { position: relative; height: 111px; margin: 2px 1px 0 2px; padding: 1px; background: #fff; border: 1px solid #6b8fb8; }
.mark { position: absolute; left: 26px; top: 3px; width: 76px; height: 50px; fill: none; stroke: #f23b3b; }
table { border-collapse: collapse; table-layout: fixed; }
th, td { height: 21px; padding: 0 2px; border: 1px solid #c0c0c0; text-align: left; font-weight: normal; line-height: 16px; overflow: hidden; }
th { background: linear-gradient(#fff, #ece9d8); }
.list { width: 100%; }
.list th:last-child { background: linear-gradient(#fcdc9c, #f2bd58); color: #5a0050; text-align: center; }
.list td { height: 20px; padding-left: 20px; background: #dfe9f6; }
.list .num { width: 26px; padding: 0; text-align: center; }
.list td.num { background: #ffce84; color: #5a0050; }

.prop-panel { flex: 1; min-height: 0; display: flex; flex-direction: column; }
.prop-box { flex: 1; min-height: 0; overflow: hidden; margin: 2px 1px 0 2px; padding: 0 1px; background: #fff; border: 1px solid #6b8fb8; border-bottom: 0; }
.props { width: 179px; }
.props th:nth-child(1) { width: 84px; }
.props th:nth-child(2) { width: 64px; }
.props td:first-child { padding-left: 20px; }
.props .key { color: #0000ff; }
.props .readonly { color: #808080; }
.props th.current { background: linear-gradient(#fcdc9c, #f2bd58); color: #5a0050; }
.props td.current { background: #dfe9f6; }
.props .group .exp { float: left; width: 11px; height: 11px; margin: 3px 6px 0 -17px; }
.props input { appearance: none; display: block; width: 13px; height: 13px; margin: 0; border: 1px solid #1c5180; background: linear-gradient(135deg, #dcdcd7, #fff); }

/* drawing area */
.work { flex: 1; min-width: 0; display: flex; flex-direction: column; }
.stage { flex: 1; min-height: 0; display: flex; }
.vbar { width: 27px; flex: none; display: flex; flex-direction: column; align-items: center; overflow: hidden; background: linear-gradient(90deg, #f5f4ee, #e2dfce); border-right: 2px solid #d5d2c2; }
.grip-h { flex: none; width: 18px; height: 3px; margin: 2px 0 3px; background: radial-gradient(circle, #9c9a8c 1px, transparent 1px) 0 0 / 4px 3px; }
.sep-h { flex: none; width: 20px; height: 1px; margin: 3px 0; background: #c2bfae; }
.vtool { flex: none; display: flex; flex-direction: column; align-items: center; gap: 2px; padding: 3px 0; }
.vtool span { width: 12px; line-height: 12px; white-space: normal; }
.vtool .arrow { width: 3px; height: 5px; margin-bottom: 4px; }
.canvas { flex: 1; min-width: 0; height: 100%; background: #000; }
.canvas text { font-size: 16px; fill: #f23b3b; }
```
